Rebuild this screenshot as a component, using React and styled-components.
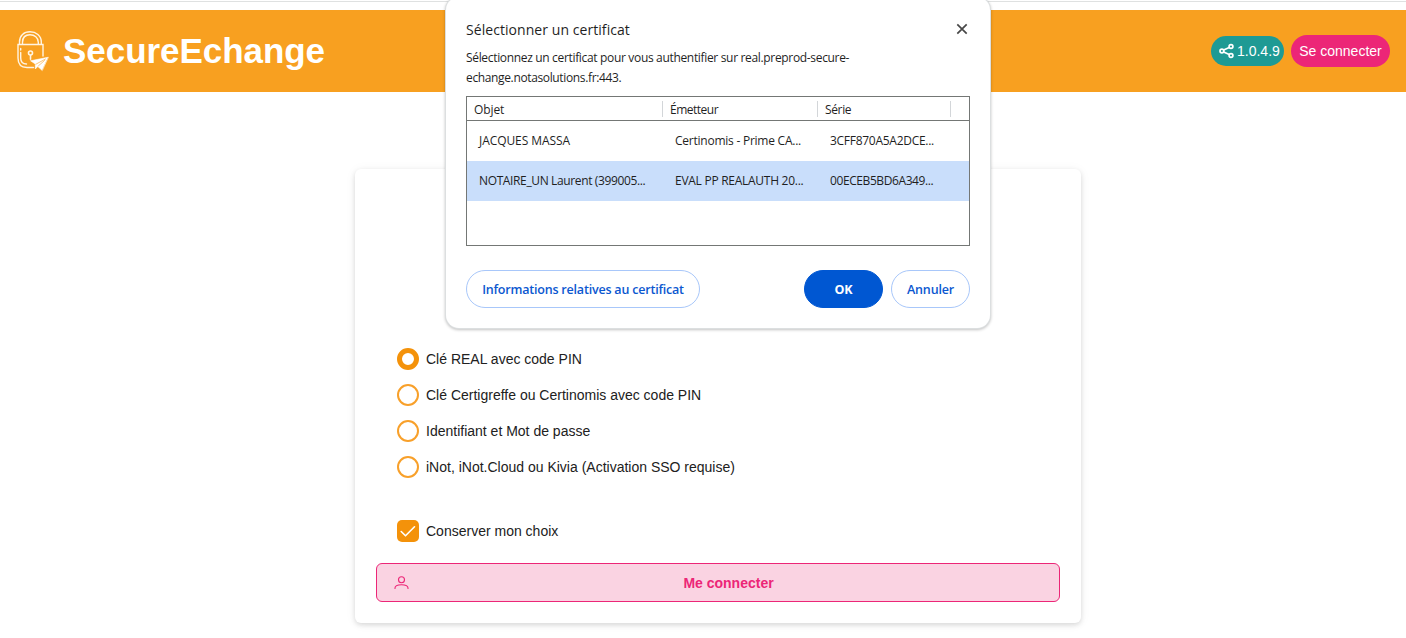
import React from "react";
import styled, { createGlobalStyle } from "styled-components";

const GlobalStyle = createGlobalStyle`
  *, *::before, *::after { box-sizing: border-box; }
  body {
    margin: 0;
    background: #fff;
    color: #212121;
    font-family: "Liberation Sans", Arial, sans-serif;
    font-size: 14px;
    overflow: hidden;
  }
  button { font: inherit; cursor: pointer; margin: 0; }
`;

const Page = styled.div`
  position: relative;
  height: 638px;
  overflow: hidden;
  display: flex;
  flex-direction: column;
`;

const BrowserEdge = styled.div`
  height: 10px;
  flex: none;
  padding-top: 1px;
  &::after {
    content: "";
    display: block;
    height: 1px;
    background: #dfe1e1;
  }
`;

const Header = styled.header`
  height: 82px;
  flex: none;
  display: flex;
  align-items: center;
  padding: 0 16px;
  background: #f8a020;
  color: #fff;
`;

const Brand = styled.h1`
  flex: 1;
  margin: 0 0 0 13px;
  font-size: 35px;
  line-height: 40px;
  font-weight: 700;
  letter-spacing: -0.05px;
`;

const Version = styled.div`
  display: flex;
  align-items: center;
  gap: 2px;
  width: 73px;
  height: 30px;
  padding-left: 8px;
  margin-right: 7px;
  border-radius: 15px;
  background: #1e9a94;
  font-size: 14px;
  white-space: nowrap;
`;

const LoginPill = styled.button`
  width: 99px;
  height: 32px;
  padding: 0;
  border: 0;
  border-radius: 16px;
  background: #ec2677;
  color: #fff;
  font-size: 14px;
`;

const Card = styled.main`
  width: 726px;
  height: 454px;
  margin: 77px 0 0 355px;
  padding: 0 21px 21px;
  display: flex;
  flex-direction: column;
  justify-content: flex-end;
  border-radius: 6px;
  background: #fff;
  box-shadow: 0 2px 5px rgba(0, 0, 0, 0.13), 0 1px 12px rgba(0, 0, 0, 0.05);
`;

const Options = styled.div`
  display: flex;
  flex-direction: column;
  gap: 14px;
  margin: 0 0 42px 21px;
`;

const Option = styled.label`
  display: flex;
  align-items: center;
  gap: 7px;
  height: 22px;
  font-size: 14px;
`;

const Radio = styled.span`
  width: 22px;
  height: 22px;
  flex: none;
  border-radius: 50%;
  border: ${(p) => (p.$checked ? "5px solid #f4920a" : "2px solid #f8a02a")};
`;

const Checkbox = styled.span`
  display: flex;
  width: 22px;
  height: 22px;
  flex: none;
  border-radius: 5px;
  background: #f4920a;
`;

const Keep = styled.div`
  margin: 0 0 21px 21px;
`;

const Submit = styled.button`
  display: grid;
  grid-template-columns: 50px 1fr 33px;
  align-items: center;
  height: 39px;
  padding: 0;
  border: 1px solid #ec2677;
  border-radius: 6px;
  background: #fad3e2;
  color: #ec2677;
  font-size: 14px;
  font-weight: 700;
  svg { margin-left: 17px; }
`;

const SubmitLabel = styled.span`
  padding-left: 4px;
`;

const Dialog = styled.section`
  position: absolute;
  left: 446px;
  top: -3px;
  width: 544px;
  height: 331px;
  padding: 22px 20px 20px;
  display: flex;
  flex-direction: column;
  border-radius: 13px;
  background: #fff;
  color: #1f1f1f;
  font-family: "Open Sans", "Noto Sans", sans-serif;
  font-size: 12px;
  box-shadow: 0 0 0 1px #dcdfe0, 0 1px 3px 1px rgba(0, 0, 0, 0.24);
`;

const DialogHead = styled.div`
  display: flex;
  justify-content: space-between;
  align-items: center;
  height: 20px;
  padding-right: 2px;
`;

const DialogTitle = styled.h2`
  margin: 0;
  font-size: 14px;
  font-weight: 400;
`;

const Run = styled.span`
  letter-spacing: ${(p) => p.$s}px;
  white-space: nowrap;
`;

const Message = styled.p`
  margin: 9px 0 8px;
  line-height: 20px;
  font-size: 12px;
`;

const Table = styled.div`
  height: 150px;
  border: 1px solid #747775;
  font-size: 12px;
`;

const Row = styled.div`
  display: grid;
  grid-template-columns: 196px 155px 1fr;
  align-items: center;
  height: 40px;
  padding: 0 0 2px 12px;
  background: ${(p) => (p.$selected ? "#c9defb" : "transparent")};
`;

const HeadRow = styled.div`
  display: grid;
  grid-template-columns: 196px 155px 133px 1fr;
  align-items: center;
  height: 24px;
  border-bottom: 1px solid #747775;
`;

const HeadCell = styled.div`
  display: flex;
  align-items: center;
  height: 16px;
  padding: 1px 0 0 7px;
  border-right: 1px solid #d3d6d9;
`;

const Actions = styled.div`
  display: flex;
  gap: 8px;
  margin-top: 24px;
`;

const DialogButton = styled.button`
  width: ${(p) => p.$w}px;
  height: 38px;
  padding: 0;
  margin-right: ${(p) => (p.$push ? "auto" : "0")};
  border: 1px solid ${(p) => (p.$primary ? "#0057d2" : "#a8c7fa")};
  border-radius: 19px;
  background: ${(p) => (p.$primary ? "#0057d2" : "#fff")};
  color: ${(p) => (p.$primary ? "#fff" : "#0b57d0")};
  font-size: 12.5px;
  font-weight: ${(p) => (p.$primary ? 700 : 600)};
`;

const LockIcon = () => (
  <svg width="34" height="42" viewBox="0 0 34 42" fill="none" stroke="#fff4e2" strokeWidth="1.4" strokeLinecap="round">
    <path d="M3.5 14V12C3.5 5.5 8 1.8 14 1.8S25.300 5.500 25.300 12V14M6.500 14V12.300C6.500 7.500 9.500 4.800 14 4.800S22.300 7.500 22.300 12.300V14" />
    <path d="M27 26V14.500H2V28C2 34 5 37.500 11 37.500H17.500" />
    <path d="M4.700 18.500V20M4.700 22.500V28C4.700 31.500 6.800 34 10.500 34" />
    <circle cx="14.500" cy="23" r="2" strokeWidth="1.600" />
    <path d="M14.500 25.500V29.300" strokeWidth="1.600" />
    <path d="M32 27.300L14.500 30.800L19.300 34L19.300 39L21.800 36.500L26 40.300Z" fill="#fff" stroke="#fff" strokeWidth="0.6" />
    <path d="M29.500 29L19.900 34.200M28.500 30.500L22.500 35.800" stroke="#f8a020" strokeWidth="0.6" />
  </svg>
);

const ShareIcon = () => (
  <svg width="16" height="16" viewBox="0 0 16 16" fill="none" stroke="#fff" strokeWidth="1.700">
    <circle cx="2.900" cy="8" r="1.900" />
    <circle cx="12" cy="3.500" r="1.900" />
    <circle cx="12" cy="12.500" r="1.900" />
    <path d="M4.700 7.100L10.200 4.400M4.700 8.900L10.200 11.600" />
  </svg>
);

const CheckIcon = () => (
  <svg width="22" height="22" viewBox="0 0 22 22" fill="none" stroke="#fff" strokeWidth="1.600" strokeLinecap="round" strokeLinejoin="round">
    <path d="M4.200 11.500L8.500 15.800L17.500 6.800" />
  </svg>
);

const UserIcon = () => (
  <svg width="16" height="16" viewBox="0 0 16 16" fill="none" stroke="#ec2677" strokeWidth="1.100" strokeLinecap="round">
    <circle cx="7.500" cy="4.700" r="3" />
    <path d="M1 13.500V13C1 10.800 3.800 9.700 7.500 9.700S14 10.800 14 13V13.500" />
  </svg>
);

const CloseIcon = () => (
  <svg width="12" height="12" viewBox="0 0 12 12" stroke="#474747" strokeWidth="1.700">
    <path d="M1.300 1.300L10.700 10.700M10.700 1.300L1.300 10.700" />
  </svg>
);

const methods = [
  { label: "Clé REAL avec code PIN", checked: true },
  { label: "Clé Certigreffe ou Certinomis avec code PIN" },
  { label: "Identifiant et Mot de passe" },
  { label: "iNot, iNot.Cloud ou Kivia (Activation SSO requise)" },
];

const certificates = [
  [["JACQUES MASSA", -0.08], ["Certinomis - Prime CA...", -0.24], ["3CFF870A5A2DCE...", -0.28]],
  [["NOTAIRE_UN Laurent (399005...", -0.37], ["EVAL PP REALAUTH 20...", -0.27], ["00ECEB5BD6A349...", -0.41]],
];

export default function App() {
  return (
    <Page>
      <GlobalStyle />
      <BrowserEdge />
      <Header>
        <LockIcon />
        <Brand>SecureEchange</Brand>
        <Version>
          <ShareIcon />
          <span>1.0.4.9</span>
        </Version>
        <LoginPill>Se connecter</LoginPill>
      </Header>
      <Card>
        <Options>
          {methods.map((m) => (
            <Option key={m.label}>
              <Radio $checked={m.checked} />
              <span>{m.label}</span>
            </Option>
          ))}
        </Options>
        <Keep>
          <Option>
            <Checkbox><CheckIcon /></Checkbox>
            <span>Conserver mon choix</span>
          </Option>
        </Keep>
        <Submit>
          <UserIcon />
          <SubmitLabel>Me connecter</SubmitLabel>
        </Submit>
      </Card>
      <Dialog role="dialog">
        <DialogHead>
          <DialogTitle><Run $s={0.06}>Sélectionner un certificat</Run></DialogTitle>
          <CloseIcon />
        </DialogHead>
        <Message>
          <Run $s={-0.33}>Sélectionnez un certificat pour vous authentifier sur real.preprod-secure-</Run>
          <br />
          <Run $s={-0.36}>echange.notasolutions.fr:443.</Run>
        </Message>
        <Table>
          <HeadRow>
            <HeadCell><Run $s={-0.1}>Objet</Run></HeadCell>
            <HeadCell><Run $s={-0.5}>Émetteur</Run></HeadCell>
            <HeadCell><Run $s={-0.35}>Série</Run></HeadCell>
          </HeadRow>
          {certificates.map((cells, i) => (
            <Row key={cells[0][0]} $selected={i === 1}>
              {cells.map(([text, s]) => (
                <Run key={text} $s={s}>{text}</Run>
              ))}
            </Row>
          ))}
        </Table>
        <Actions>
          <DialogButton $w={234} $push><Run $s={-0.2}>Informations relatives au certificat</Run></DialogButton>
          <DialogButton $w={79} $primary><Run $s={-0.2}>OK</Run></DialogButton>
          <DialogButton $w={79}><Run $s={-0.15}>Annuler</Run></DialogButton>
        </Actions>
      </Dialog>
    </Page>
  );
}
